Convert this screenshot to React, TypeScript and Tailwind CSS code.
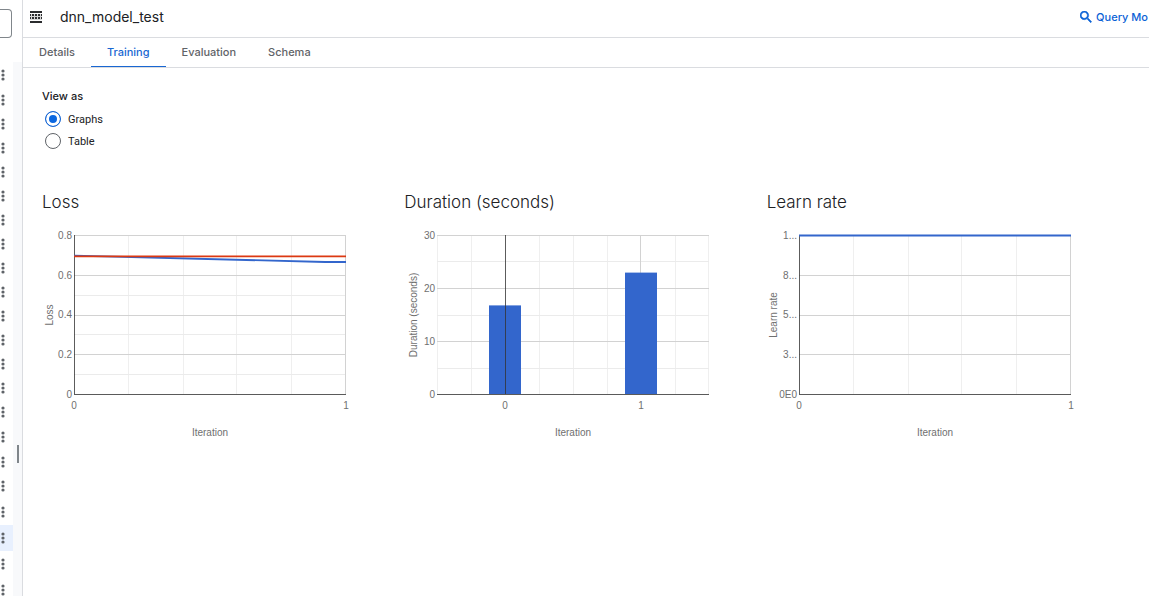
import React from "react";

type Tick = { at: number; label: string };
type ChartProps = {
  title: string;
  yTitle: string;
  yTitleX: number;
  left: number;
  width: number;
  majorX: number[];
  minorX: number[];
  majorY: number[];
  minorY: number[];
  xTicks: Tick[];
  yTicks: Tick[];
  axisX: number;
  under?: React.ReactNode;
  over?: React.ReactNode;
};

const TOP = 10;
const BOTTOM = 169;

function Chart(p: ChartProps) {
  const height = BOTTOM - TOP + 1;
  return (
    <section>
      <h2 className="font-[Inter,sans-serif] text-[17px] leading-6 font-light text-[#202124]">{p.title}</h2>
      <svg
        width="340"
        height="220"
        viewBox="0 0 340 220"
        role="img"
        aria-label={p.title}
        className="mt-[11px] block overflow-visible font-[Liberation_Sans,Arial,sans-serif] text-[10px]"
      >
        {p.minorX.map((x) => (
          <rect key={x} x={x} y={TOP} width="1" height={height} fill="#efefef" />
        ))}
        {p.minorY.map((y) => (
          <rect key={y} x={p.left} y={y} width={p.width} height="1" fill="#ebebeb" />
        ))}
        {p.majorX.map((x) => (
          <rect key={x} x={x} y={TOP} width="1" height={height} fill="#d2d2d2" />
        ))}
        {p.majorY.map((y) => (
          <rect key={y} x={p.left} y={y} width={p.width} height="1" fill="#d2d2d2" />
        ))}
        {p.under}
        <rect x={p.axisX} y={TOP} width="1" height={height} fill="#333333" fillOpacity="0.8" />
        <rect x={p.left} y={BOTTOM} width={p.width} height="1" fill="#5a5a5a" />
        {p.over}
        <g fill="#6f6f6f">
          {p.yTicks.map((t) => (
            <text key={t.at} x={p.left - 2} y={t.at + 4} textAnchor="end">
              {t.label}
            </text>
          ))}
          {p.xTicks.map((t) => (
            <text key={t.at} x={t.at} y="184" textAnchor="middle">
              {t.label}
            </text>
          ))}
          <text x={p.left + p.width / 2} y="211" textAnchor="middle">
            Iteration
          </text>
          <text transform={`translate(${p.yTitleX} 90) rotate(-90)`} textAnchor="middle">
            {p.yTitle}
          </text>
        </g>
      </svg>
    </section>
  );
}

const rows = [
  "h-[26px]",
  ...Array<string>(14).fill("h-6"),
  "h-[26px]",
  "h-6",
  "h-6",
  "h-[27px]",
  "h-[26px] bg-[#e8f0fe]",
  "h-[26px]",
  "h-[26px]",
];

const tabs = ["Details", "Training", "Evaluation", "Schema"];

const radio =
  "size-4 shrink-0 appearance-none rounded-full border border-[#5f6368] bg-white checked:border-[#1967d2] checked:bg-[#0b67e0] checked:shadow-[inset_0_0_0_3px_#fff]";

export default function App() {
  return (
    <div className="flex min-h-screen overflow-hidden bg-white font-[Roboto,sans-serif] text-[#202124]">
      <aside className="relative flex h-screen w-[23px] shrink-0 flex-col overflow-hidden border-r border-[#dadce0]">
        <div className="flex h-[62px] shrink-0 pt-[9px]">
          <input
            aria-label="Search resources"
            className="h-[29px] w-3 rounded-r border border-l-0 border-[#80868b]"
          />
        </div>
        <div className="flex min-h-0 flex-1 bg-[#f8f9fb]">
          <ul className="w-[13px] overflow-hidden bg-white">
            {rows.map((size, i) => (
              <li key={i} className={size}>
                <button aria-label="View actions" className="flex h-full items-center pl-px">
                  <svg width="4" height="12" viewBox="0 0 4 12" fill="#5f6368">
                    <circle cx="2" cy="2" r="1.6" />
                    <circle cx="2" cy="6" r="1.6" />
                    <circle cx="2" cy="10" r="1.6" />
                  </svg>
                </button>
              </li>
            ))}
          </ul>
        </div>
        <div className="absolute top-[445px] left-[17px] h-[18px] w-0.5 bg-[#80868b]" />
      </aside>

      <main className="min-w-0 flex-1">
        <header className="flex h-[38px] items-center border-b border-[#dadce0] pb-[3px] pl-[7px]">
          <svg width="12" height="12" viewBox="0 0 12 12" fill="#2b2c2e">
            <path d="M0 0h12v2H0zM0 10h12v2H0z" />
            <path fillOpacity="0.2" d="M0 3h12v6H0z" />
            <path d="M0 3h1v2H0zM2 3h2v2H2zM5 3h2v2H5zM8 3h2v2H8zM11 3h1v2h-1zM0 6h1v2H0zM2 6h2v2H2zM5 6h2v2H5zM8 6h2v2H8zM11 6h1v2h-1z" />
          </svg>
          <h1 className="ml-[18px] font-[Inter,sans-serif] text-sm">dnn_model_test</h1>
          <button className="ml-auto flex items-center gap-1 pr-px font-[Inter,sans-serif] text-[11px] font-medium whitespace-nowrap text-[#0b62d6]">
            <svg width="12" height="12" viewBox="3 3 18 18" fill="#0b62d6" stroke="#0b62d6" strokeWidth="0.8">
              <path d="M15.5 14h-.79l-.28-.27A6.47 6.47 0 0 0 16 9.5 6.5 6.5 0 1 0 9.5 16c1.61 0 3.09-.59 4.23-1.57l.27.28v.79l5 4.99L20.49 19l-4.99-5zm-6 0C7.01 14 5 11.99 5 9.5S7.01 5 9.5 5 14 7.01 14 9.5 11.99 14 9.5 14z" />
            </svg>
            Query Mo
          </button>
        </header>

        <div role="tablist" className="flex h-[30px] border-b border-[#dadce0] font-[Inter,sans-serif]">
          {tabs.map((tab) => (
            <button
              key={tab}
              role="tab"
              aria-selected={tab === "Training"}
              className="border-b border-transparent px-4 text-[11px] font-medium text-[#5f6368] aria-selected:border-[#1967d2] aria-selected:text-[#1967d2]"
            >
              {tab}
            </button>
          ))}
        </div>

        <fieldset className="pt-5 pl-[19px]">
          <legend className="float-left w-full font-[Inter,sans-serif] text-[11px] leading-4 font-medium">View as</legend>
          <div className="clear-both flex flex-col gap-1 pt-1.5 pl-[3px] text-[11px] leading-4">
            <label className="flex items-center gap-[7px]">
              <input type="radio" name="view" defaultChecked className={radio} />
              <span className="pt-0.5">Graphs</span>
            </label>
            <label className="flex items-center gap-[7px]">
              <input type="radio" name="view" className={radio} />
              <span className="pt-0.5">Table</span>
            </label>
          </div>
        </fieldset>

        <div className="mt-10 grid grid-cols-3 pr-5 pl-[19px]">
          <Chart
            title="Loss"
            yTitle="Loss"
            yTitleX={11}
            left={32}
            width={272}
            axisX={32}
            majorX={[303]}
            minorX={[86, 141, 194, 249]}
            majorY={[10, 50, 90, 129]}
            minorY={[70, 109, 149]}
            xTicks={[{ at: 32, label: "0" }, { at: 304, label: "1" }]}
            yTicks={[
              { at: 10, label: "0.8" },
              { at: 50, label: "0.6" },
              { at: 89, label: "0.4" },
              { at: 129, label: "0.2" },
              { at: 169, label: "0" },
            ]}
            over={
              <g fill="none" strokeWidth="1.8">
                <path d="M32 30.6 283 37H304" stroke="#3366cc" />
                <path d="M32 31.3H304" stroke="#dc3912" />
              </g>
            }
          />
          <Chart
            title="Duration (seconds)"
            yTitle="Duration (seconds)"
            yTitleX={13}
            left={33}
            width={272}
            axisX={101}
            majorX={[236]}
            minorX={[33, 67, 135, 169, 203, 271, 304]}
            majorY={[10, 63, 116]}
            minorY={[36, 90, 143]}
            xTicks={[{ at: 101, label: "0" }, { at: 237, label: "1" }]}
            yTicks={[
              { at: 10, label: "30" },
              { at: 63, label: "20" },
              { at: 116, label: "10" },
              { at: 169, label: "0" },
            ]}
            under={
              <g fill="#3366cc">
                <rect x="85" y="80.4" width="32" height="88.6" />
                <rect x="221" y="47.6" width="32" height="121.4" />
              </g>
            }
          />
          <Chart
            title="Learn rate"
            yTitle="Learn rate"
            yTitleX={10}
            left={32}
            width={272}
            axisX={32}
            majorX={[303]}
            minorX={[86, 141, 194, 249]}
            majorY={[10, 50, 90, 129]}
            minorY={[]}
            xTicks={[{ at: 32, label: "0" }, { at: 304, label: "1" }]}
            yTicks={[
              { at: 10, label: "1..." },
              { at: 50, label: "8..." },
              { at: 89, label: "5..." },
              { at: 129, label: "3..." },
              { at: 169, label: "0E0" },
            ]}
            over={<path d="M32 10.5H304" stroke="#3366cc" strokeWidth="1.8" />}
          />
        </div>
      </main>
    </div>
  );
}
